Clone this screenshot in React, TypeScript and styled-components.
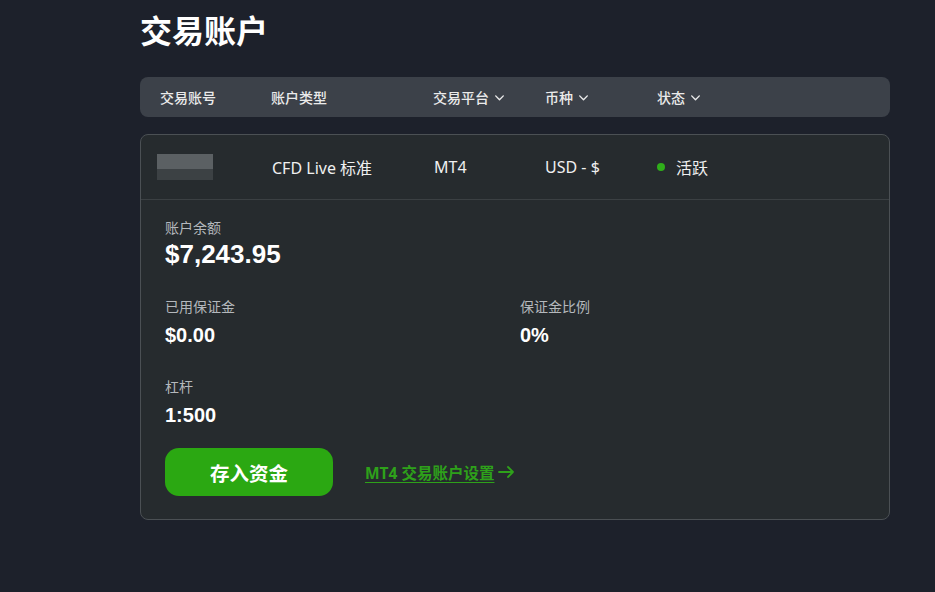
import * as React from 'react';
import styled, { createGlobalStyle } from 'styled-components';

const GlobalStyle = createGlobalStyle`
  html, body {
    margin: 0;
    padding: 0;
    background: #1d212b;
  }
  body {
    font-family: "Noto Sans", "Noto Sans CJK SC", sans-serif;
    color: #f2f2f2;
  }
`;

const Page = styled.div`
  width: 935px;
  height: 592px;
  box-sizing: border-box;
  padding: 8px 45px 0 140px;
  background: #1d212b;
`;

const Title = styled.h1`
  margin: 0;
  font-size: 32px;
  line-height: 46px;
  font-weight: 700;
  color: #ffffff;
`;

const Columns = styled.div`
  display: grid;
  grid-template-columns: 111px 162px 112px 112px 1fr;
  align-items: center;
`;

const HeaderBar = styled(Columns)`
  margin-top: 23px;
  height: 40px;
  padding-left: 20px;
  background: #3c4149;
  border-radius: 8px;
`;

const HeaderCell = styled.div`
  display: flex;
  align-items: center;
  gap: 4px;
  font-size: 14px;
  font-weight: 500;
  color: #ebebeb;
`;

const Card = styled.div`
  margin-top: 17px;
  background: #262b2e;
  border: 1px solid #4b5054;
  border-radius: 8px;
  overflow: hidden;
`;

const Row = styled(Columns)`
  height: 64px;
  padding-left: 16px;
  border-bottom: 1px solid #3b4043;
  grid-template-columns: 115px 162px 111px 112px 1fr;
`;

const RowCell = styled.div`
  display: flex;
  align-items: center;
  font-size: 16px;
  color: #f0f0f0;
`;

const Masked = styled.div`
  width: 56px;
  height: 26px;
  background: linear-gradient(#5b6063 0 58%, #3c4144 58% 100%);
  filter: blur(0.7px);
`;

const Dot = styled.span`
  width: 8px;
  height: 8px;
  border-radius: 50%;
  background: #2fae1a;
  margin: 0 11px 0 0;
`;

const Details = styled.div`
  padding: 18px 24px 23px 24px;
`;

const StatGrid = styled.div`
  display: grid;
  grid-template-columns: 355px 1fr;
  row-gap: 24px;
`;

const Stat = styled.div<{ $wide?: boolean }>`
  grid-column: ${(p) => (p.$wide ? '1 / -1' : 'auto')};
  display: flex;
  flex-direction: column;
`;

const Label = styled.div`
  font-size: 14px;
  line-height: 20px;
  color: #b4b8bc;
`;

const Value = styled.div<{ $big?: boolean }>`
  font-family: "Liberation Sans", Arial, sans-serif;
  font-weight: 700;
  font-size: ${(p) => (p.$big ? '26px' : '20px')};
  line-height: ${(p) => (p.$big ? '32px' : '36px')};
  padding-bottom: ${(p) => (p.$big ? '3px' : '0')};
  color: #ffffff;
`;

const Actions = styled.div`
  display: flex;
  align-items: center;
  gap: 32px;
  margin-top: 15px;
`;

const DepositButton = styled.button`
  width: 168px;
  height: 48px;
  border: none;
  border-radius: 14px;
  background: #2ba812;
  color: #ffffff;
  font-family: "Noto Sans", "Noto Sans CJK SC", sans-serif;
  font-size: 19.5px;
  font-weight: 700;
  cursor: pointer;
`;

const SettingsLink = styled.a`
  display: flex;
  align-items: center;
  gap: 4px;
  color: #2ea11a;
  font-size: 15.5px;
  font-weight: 700;
  text-decoration: none;
  cursor: pointer;

  span {
    text-decoration: underline;
    text-underline-offset: 3px;
  }
`;

const Chevron = () => (
  <svg width="13" height="13" viewBox="0 0 24 24" fill="none" stroke="#ebebeb" strokeWidth="2.6" strokeLinecap="round" strokeLinejoin="round">
    <path d="M5 9l7 7 7-7" />
  </svg>
);

const Arrow = () => (
  <svg width="17" height="14" viewBox="0 0 17 14" fill="none" stroke="#2ea11a" strokeWidth="1.8" strokeLinecap="round" strokeLinejoin="round">
    <path d="M1 7h14M10 2l5 5-5 5" />
  </svg>
);

const headers = [
  { label: '交易账号', menu: false },
  { label: '账户类型', menu: false },
  { label: '交易平台', menu: true },
  { label: '币种', menu: true },
  { label: '状态', menu: true },
];

export default function App() {
  return (
    <Page>
      <GlobalStyle />
      <Title>交易账户</Title>

      <HeaderBar>
        {headers.map((h) => (
          <HeaderCell key={h.label}>
            {h.label}
            {h.menu && <Chevron />}
          </HeaderCell>
        ))}
      </HeaderBar>

      <Card>
        <Row>
          <RowCell>
            <Masked />
          </RowCell>
          <RowCell>CFD Live 标准</RowCell>
          <RowCell>MT4</RowCell>
          <RowCell>USD - $</RowCell>
          <RowCell>
            <Dot />
            活跃
          </RowCell>
        </Row>

        <Details>
          <StatGrid>
            <Stat $wide>
              <Label>账户余额</Label>
              <Value $big>$7,243.95</Value>
            </Stat>
            <Stat>
              <Label>已用保证金</Label>
              <Value>$0.00</Value>
            </Stat>
            <Stat>
              <Label>保证金比例</Label>
              <Value>0%</Value>
            </Stat>
            <Stat $wide>
              <Label>杠杆</Label>
              <Value>1:500</Value>
            </Stat>
          </StatGrid>

          <Actions>
            <DepositButton>存入资金</DepositButton>
            <SettingsLink>
              <span>MT4 交易账户设置</span>
              <Arrow />
            </SettingsLink>
          </Actions>
        </Details>
      </Card>
    </Page>
  );
}
